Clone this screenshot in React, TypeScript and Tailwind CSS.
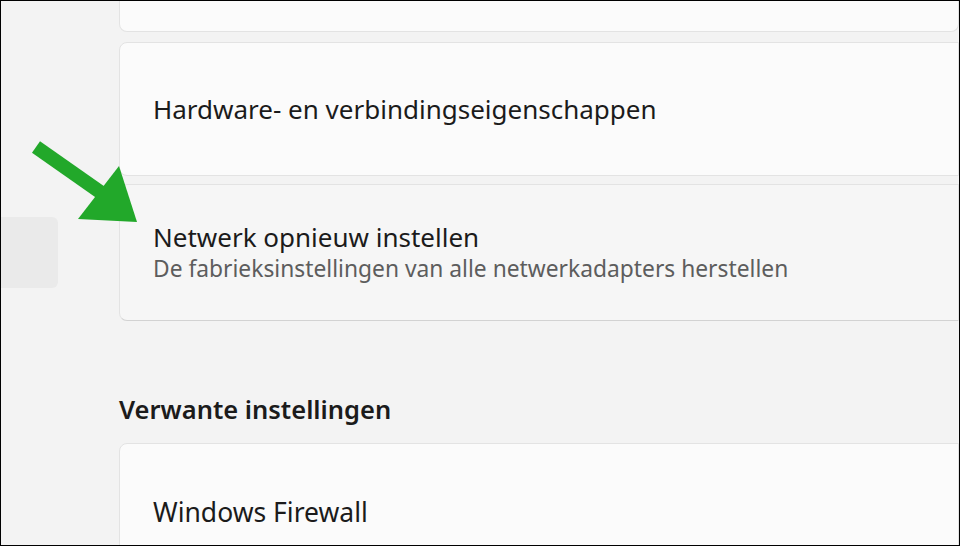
export default function App() {
  return (
    <div
      className="relative h-[546px] w-[960px] overflow-hidden border border-black bg-[#f3f3f3] text-[#1b1b1b]"
      style={{ fontFamily: '"Noto Sans", "Open Sans", sans-serif' }}
    >
      <div className="flex h-full">
        {/* sidebar stub */}
        <div className="w-[118px] shrink-0 pt-[216px]">
          <div className="h-[71px] w-[57px] rounded-r-md bg-[#eaeaea]" />
        </div>

        {/* content */}
        <div className="-mt-[21px] flex flex-1 flex-col gap-2">
          <div className="h-[52px] shrink-0 rounded-b-lg border border-t-0 border-[#e3e3e3] bg-[#fbfbfb]" />
          <div className="mt-[2px] flex h-[134px] shrink-0 items-center rounded-l-lg border border-[#e3e3e3] bg-[#fbfbfb] pl-[33px]">
            <span className="text-[26px] leading-[36px]">Hardware- en verbindingseigenschappen</span>
          </div>
          <div className="flex h-[137px] shrink-0 flex-col justify-center rounded-l-lg border border-[#e3e3e3] border-b-[#d2d2d2] bg-[#f6f6f6] pl-[33px]">
            <span className="text-[26px] leading-[32px]">Netwerk opnieuw instellen</span>
            <span className="text-[22.8px] leading-[32px] text-[#5d5d5d]">
              De fabrieksinstellingen van alle netwerkadapters herstellen
            </span>
          </div>
          <h2 className="mt-[65px] shrink-0 text-[25.5px] font-semibold leading-[30px]">Verwante instellingen</h2>
          <div className="mt-[11px] flex h-[140px] shrink-0 items-start rounded-l-lg border border-[#e3e3e3] bg-[#fbfbfb] pl-[33px] pt-[50px]">
            <span className="text-[26.5px] leading-[36px]">Windows Firewall</span>
          </div>
        </div>
      </div>

      {/* green arrow */}
      <svg className="absolute left-0 top-0" width="960" height="546" viewBox="0 0 960 546">
        <line x1="35" y1="146" x2="102" y2="193" stroke="#22a82a" strokeWidth="14" />
        <polygon points="118,165 77,218 136,221" fill="#22a82a" />
      </svg>
    </div>
  );
}
